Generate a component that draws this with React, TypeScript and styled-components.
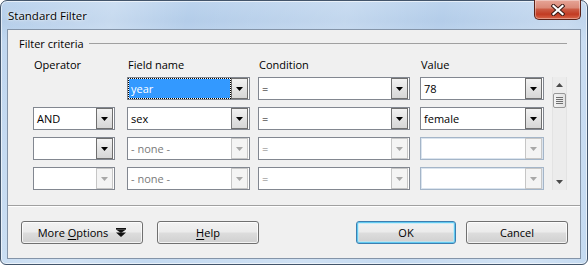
import React from 'react';
import styled, { createGlobalStyle, css } from 'styled-components';

const Global = createGlobalStyle`
  html, body { margin: 0; padding: 0; background: #ffffff; }
  body {
    width: 588px; height: 265px; overflow: hidden;
    font-family: "Open Sans", "Noto Sans", "DejaVu Sans", sans-serif;
    -webkit-font-smoothing: antialiased;
  }
  #root { width: 588px; height: 265px; }
`;

const FONT = css`
  font-family: "Open Sans", "Noto Sans", "DejaVu Sans", sans-serif;
  font-size: 11px;
  line-height: 15px;
`;

const Window = styled.div`
  box-sizing: border-box;
  width: 588px;
  height: 265px;
  border: 1px solid #43556b;
  border-radius: 7px 7px 6px 6px;
  background:
    linear-gradient(100deg, rgba(255,255,255,0) 0%, rgba(255,255,255,.25) 18%, rgba(255,255,255,0) 30%, rgba(255,255,255,.2) 55%, rgba(255,255,255,0) 70%, rgba(255,255,255,.25) 90%, rgba(255,255,255,0) 100%),
    linear-gradient(180deg, #bcd4ee 0px, #b4cde9 20px, #bfd6ef 40px, #c4daf1 100%);
  box-shadow: inset 0 0 0 1px rgba(255,255,255,.6);
  display: flex;
  flex-direction: column;
  padding: 0 6px 5px 6px;
`;

const TitleBar = styled.div`
  height: 28px;
  display: flex;
  align-items: flex-start;
`;

const Title = styled.div`
  ${FONT};
  font-size: 11.5px;
  margin: 7px 0 0 1px;
  color: #000;
  text-shadow: 0 0 6px rgba(255,255,255,.9), 0 0 2px rgba(255,255,255,.9);
`;

const CloseButton = styled.div`
  margin-left: auto;
  margin-top: -1px;
  box-sizing: border-box;
  width: 47px;
  height: 20px;
  border: 1px solid #5b2117;
  border-top: none;
  border-radius: 0 0 5px 5px;
  background: linear-gradient(180deg, #e6a597 0%, #db8a78 40%, #cb5a43 50%, #c23b23 75%, #d8664a 100%);
  box-shadow: inset 0 0 0 1px rgba(255,255,255,.35);
  display: flex;
  align-items: center;
  justify-content: center;
`;

const Client = styled.div`
  flex: 1;
  background: #f0f0f0;
  border: 1px solid #8494a8;
  display: flex;
  flex-direction: column;
`;

const SectionHead = styled.div`
  display: flex;
  align-items: center;
  height: 15px;
  margin: 6px 13px 0 11px;
`;

const SectionLabel = styled.span`
  ${FONT};
  color: #000;
`;

const SectionLine = styled.div`
  flex: 1;
  height: 1px;
  margin-left: 5px;
  background: #a0a0a0;
`;

const COLS = '94px 131px 162px 132px 15px';

const HeaderRow = styled.div`
  display: grid;
  grid-template-columns: ${COLS};
  height: 15px;
  margin: 6px 0 0 25px;
`;

const HeaderLabel = styled.div`
  ${FONT};
  color: #000;
  padding-left: 1px;
`;

const Rows = styled.div`
  display: grid;
  grid-template-columns: ${COLS};
  grid-template-rows: repeat(4, 23px);
  row-gap: 7px;
  margin: 5px 0 0 25px;
`;

type Tone = 'normal' | 'disabled' | 'blue';

const Combo = styled.div<{ $w: number; $tone: Tone }>`
  box-sizing: border-box;
  width: ${p => p.$w}px;
  height: 23px;
  display: flex;
  align-items: stretch;
  background: #fff;
  padding-right: 1px;
  border: 1px solid ${p => (p.$tone === 'blue' ? '#a4b5c8' : p.$tone === 'disabled' ? '#9a9a9a' : '#828790')};
  ${p => p.$tone === 'blue' && css`box-shadow: inset 0 0 0 1px #dbe4ee;`}
`;

const ComboText = styled.div<{ $dim?: boolean }>`
  ${FONT};
  flex: 1;
  display: flex;
  align-items: center;
  padding-left: 3px;
  color: ${p => (p.$dim ? '#7a7a7a' : '#000')};
  white-space: nowrap;
`;

const Selected = styled.span`
  flex: 1;
  align-self: stretch;
  margin: 1px 1px 1px -2px;
  padding-left: 2px;
  display: flex;
  align-items: center;
  background: #3399ff;
  color: #fff;
  outline: 1px dotted #000;
  outline-offset: 0;
`;

const ArrowButton = styled.div<{ $disabled?: boolean }>`
  box-sizing: border-box;
  width: 17px;
  display: flex;
  align-items: center;
  justify-content: center;
  border: 1px solid ${p => (p.$disabled ? '#c6c6c6' : '#6f6f6f')};
  background: ${p => (p.$disabled ? '#f4f4f4' : 'linear-gradient(180deg, #f2f2f2 0%, #e4e4e4 50%, #d6d6d6 100%)')};
`;

const ScrollBar = styled.div`
  grid-column: 5;
  grid-row: 1 / span 4;
  box-sizing: border-box;
  width: 15px;
  display: flex;
  flex-direction: column;
  background: #ececec;
  border-left: 1px solid #e3e3e3;
  border-right: 1px solid #e3e3e3;
`;

const ScrollArrow = styled.div`
  height: 16px;
  display: flex;
  align-items: center;
  justify-content: center;
`;

const ScrollThumb = styled.div`
  box-sizing: border-box;
  height: 15px;
  margin: 0 0 0 0;
  border: 1px solid #979797;
  border-radius: 2px;
  background: linear-gradient(90deg, #f3f3f3, #e2e2e2);
  display: flex;
  flex-direction: column;
  align-items: center;
  justify-content: center;
  gap: 1px;
`;

const Grip = styled.div`
  width: 7px;
  height: 1px;
  background: #6f6f6f;
`;

const ScrollSpacer = styled.div`
  flex: 1;
`;

const Separator = styled.div`
  height: 1px;
  margin-top: 15px;
  background: #a0a0a0;
  border-bottom: 1px solid #ffffff;
`;

const ButtonRow = styled.div`
  display: flex;
  margin: 14px 12px 0 13px;
  height: 23px;
`;

const ButtonGroup = styled.div<{ $gap: number }>`
  display: flex;
  gap: ${p => p.$gap}px;
`;

const Spacer = styled.div`
  flex: 1;
`;

const PushButton = styled.div<{ $w: number; $default?: boolean }>`
  ${FONT};
  box-sizing: border-box;
  width: ${p => p.$w}px;
  height: 23px;
  display: flex;
  align-items: center;
  justify-content: center;
  gap: 8px;
  color: #000;
  border-radius: 3px;
  border: 1px solid ${p => (p.$default ? '#3c7fb1' : '#707070')};
  background: linear-gradient(180deg, #f2f2f2 0%, #ebebeb 48%, #dddddd 52%, #cfcfcf 100%);
  box-shadow: ${p =>
    p.$default
      ? 'inset 0 0 0 1px #61c9f0, inset 0 0 0 2px rgba(180,235,252,.6)'
      : 'inset 0 0 0 1px rgba(255,255,255,.75)'};
  u { text-decoration: underline; text-underline-offset: 2px; }
`;

const Tri = ({ color, dir = 'down', w = 7, h = 4 }: { color: string; dir?: 'down' | 'up'; w?: number; h?: number }) => (
  <svg width={w} height={h} viewBox={`0 0 ${w} ${h}`}>
    {dir === 'down' ? (
      <polygon points={`0,0 ${w},0 ${w / 2},${h}`} fill={color} />
    ) : (
      <polygon points={`0,${h} ${w},${h} ${w / 2},0`} fill={color} />
    )}
  </svg>
);

const CloseX = () => (
  <svg width="14" height="12" viewBox="0 0 14 12">
    <path d="M2.5 2 L11.5 10 M11.5 2 L2.5 10" stroke="#3a1b16" strokeWidth="4.2" strokeLinecap="square" />
    <path d="M2.5 2 L11.5 10 M11.5 2 L2.5 10" stroke="#ffffff" strokeWidth="2.2" strokeLinecap="square" />
  </svg>
);

const DoubleDown = () => (
  <svg width="10" height="9" viewBox="0 0 10 9">
    <rect x="0" y="0" width="10" height="1.5" fill="#111" />
    <polygon points="0,1.5 10,1.5 5,5" fill="#111" />
    <polygon points="0,4.5 10,4.5 5,9" fill="#111" />
  </svg>
);

type ComboProps = {
  w: number;
  text?: string;
  selected?: boolean;
  tone?: Tone;
  buttonDisabled?: boolean;
  dimText?: boolean;
};

const ComboBox = ({ w, text = '', selected, tone = 'normal', buttonDisabled, dimText }: ComboProps) => (
  <Combo $w={w} $tone={tone}>
    <ComboText $dim={dimText}>{selected ? <Selected>{text}</Selected> : text}</ComboText>
    <ArrowButton $disabled={buttonDisabled}>
      <Tri color={buttonDisabled ? '#a8a8a8' : '#000'} />
    </ArrowButton>
  </Combo>
);

const W = { op: 82, field: 123, cond: 152, value: 124 };

export default function App() {
  return (
    <>
      <Global />
      <Window>
        <TitleBar>
          <Title>Standard Filter</Title>
          <CloseButton>
            <CloseX />
          </CloseButton>
        </TitleBar>
        <Client>
          <SectionHead>
            <SectionLabel>Filter criteria</SectionLabel>
            <SectionLine />
          </SectionHead>
          <HeaderRow>
            <HeaderLabel>Operator</HeaderLabel>
            <HeaderLabel>Field name</HeaderLabel>
            <HeaderLabel>Condition</HeaderLabel>
            <HeaderLabel>Value</HeaderLabel>
          </HeaderRow>
          <Rows>
            <div />
            <ComboBox w={W.field} text="year" selected />
            <ComboBox w={W.cond} text="=" />
            <ComboBox w={W.value} text="78" />

            <ComboBox w={W.op} text="AND" />
            <ComboBox w={W.field} text="sex" />
            <ComboBox w={W.cond} text="=" />
            <ComboBox w={W.value} text="female" />

            <ComboBox w={W.op} text="" />
            <ComboBox w={W.field} text="- none -" dimText buttonDisabled />
            <ComboBox w={W.cond} text="=" dimText buttonDisabled />
            <ComboBox w={W.value} text="" tone="blue" buttonDisabled />

            <ComboBox w={W.op} text="" buttonDisabled />
            <ComboBox w={W.field} text="- none -" dimText buttonDisabled />
            <ComboBox w={W.cond} text="=" dimText buttonDisabled />
            <ComboBox w={W.value} text="" tone="blue" buttonDisabled />

            <ScrollBar>
              <ScrollArrow>
                <Tri color="#4a4a4a" dir="up" w={7} h={4} />
              </ScrollArrow>
              <ScrollThumb>
                <Grip />
                <Grip />
                <Grip />
                <Grip />
              </ScrollThumb>
              <ScrollSpacer />
              <ScrollArrow>
                <Tri color="#4a4a4a" w={7} h={4} />
              </ScrollArrow>
            </ScrollBar>
          </Rows>
          <Separator />
          <ButtonRow>
            <ButtonGroup $gap={14}>
              <PushButton $w={122}>
                <span>
                  More <u>O</u>ptions
                </span>
                <DoubleDown />
              </PushButton>
              <PushButton $w={102}>
                <span>
                  <u>H</u>elp
                </span>
              </PushButton>
            </ButtonGroup>
            <Spacer />
            <ButtonGroup $gap={10}>
              <PushButton $w={100} $default>
                OK
              </PushButton>
              <PushButton $w={102}>Cancel</PushButton>
            </ButtonGroup>
          </ButtonRow>
        </Client>
      </Window>
    </>
  );
}
